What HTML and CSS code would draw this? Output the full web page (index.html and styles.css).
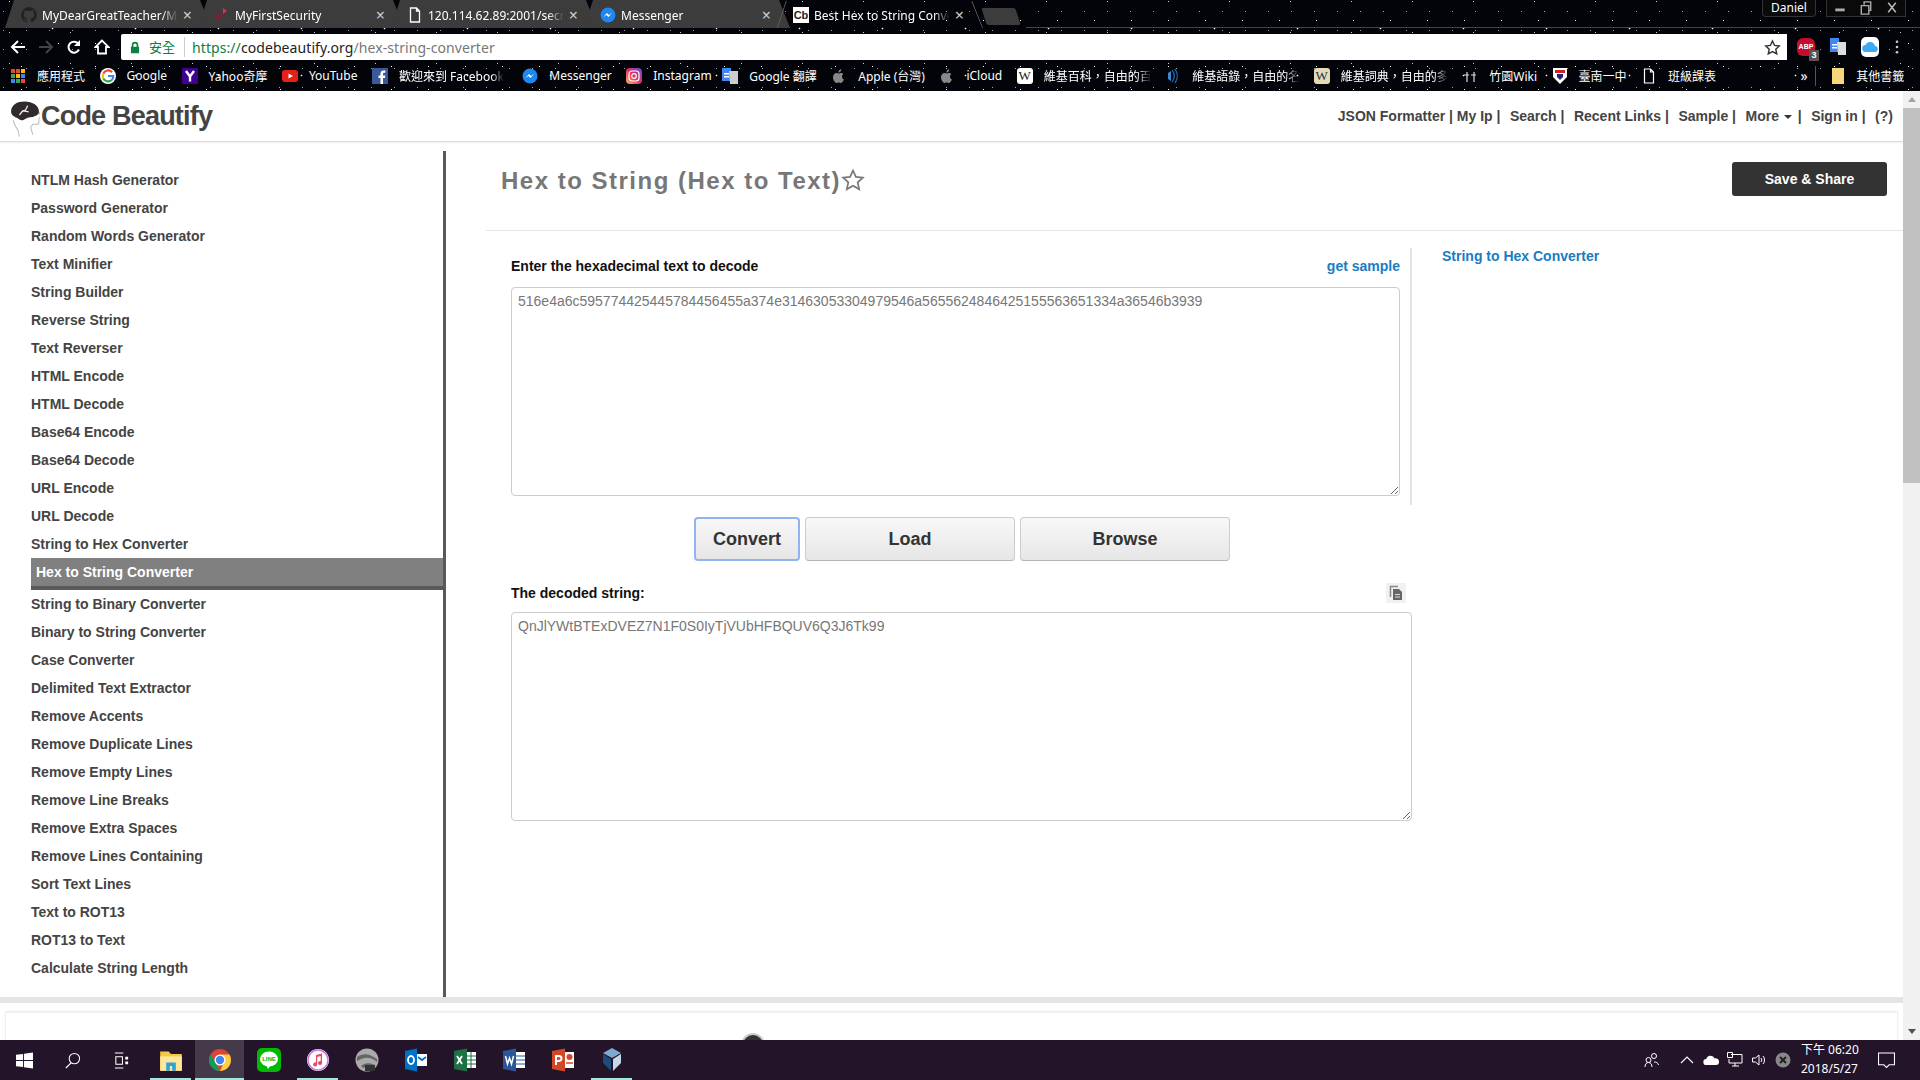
FILE: index.html
```html
<!DOCTYPE html>
<html lang="zh-Hant">
<head>
  <meta charset="UTF-8">
  <title>Best Hex to String Converter</title>
  <link rel="stylesheet" href="styles.css">
</head>
<body>
<div class="browser">
  <!-- tab strip -->
  <div class="tabs">
    <div class="tab">
      <svg class="fav" viewBox="0 0 16 16"><path fill="#222" d="M8 0a8 8 0 0 0-2.500 15.600c.4.100.5-.2.5-.4v-1.400c-2.200.5-2.700-1-2.700-1-.4-.9-.9-1.200-.9-1.200-.7-.5.100-.5.100-.5.800.1 1.200.8 1.200.8.700 1.200 1.900.9 2.300.7.100-.5.300-.9.500-1.100-1.800-.2-3.600-.9-3.600-4 0-.9.300-1.600.8-2.100-.1-.2-.4-1 .1-2.100 0 0 .7-.2 2.200.8a7.600 7.600 0 0 1 4 0c1.500-1 2.200-.8 2.200-.8.400 1.100.200 1.900.100 2.100.5.600.8 1.300.8 2.100 0 3.100-1.900 3.700-3.700 3.900.3.300.6.800.6 1.500v2.200c0 .2.100.5.600.4A8 8 0 0 0 8 0z"/></svg>
      <span class="tab-label">MyDearGreatTeacher/MyFirst</span><span class="tab-x">×</span>
    </div>
    <div class="tab">
      <svg class="fav" viewBox="0 0 16 16"><path fill="#d8344a" d="M9 1l4 3-4 3z"/><path fill="#7a2030" d="M8 2v8a3 3 0 1 1-2-2.800V2z"/></svg>
      <span class="tab-label">MyFirstSecurity</span><span class="tab-x">×</span>
    </div>
    <div class="tab">
      <svg class="fav" viewBox="0 0 16 16"><path fill="none" stroke="#fff" stroke-width="1.300" d="M3.500 1h6l3 3v11h-9zM9.500 1v3h3"/></svg>
      <span class="tab-label">120.114.62.89:2001/secret.html</span><span class="tab-x">×</span>
    </div>
    <div class="tab">
      <svg class="fav" viewBox="0 0 16 16"><circle cx="8" cy="8" r="7.500" fill="#1e88f0"/><path fill="#fff" d="M3.500 10l3.500-4 2 2 3-2-3.500 4-2-2z"/></svg>
      <span class="tab-label">Messenger</span><span class="tab-x">×</span>
    </div>
    <div class="tab tab-active">
      <span class="fav fav-cb">Cb</span>
      <span class="tab-label">Best Hex to String Converter</span><span class="tab-x">×</span>
    </div>
    <div class="tab-new"></div>
    <div class="tabs-rest">
      <span class="profile">Daniel</span>
      <div class="win-btns">
        <svg viewBox="0 0 22 17"><rect x="6" y="9" width="10" height="3" fill="#aaa"/></svg>
        <svg viewBox="0 0 22 17"><path fill="none" stroke="#aaa" stroke-width="1.500" d="M6 6h8v9H6zM9 5V2h7v9h-2"/></svg>
        <svg viewBox="0 0 22 17"><path fill="none" stroke="#bbb" stroke-width="1.600" d="M7 3l8 10M15 3L7 13"/></svg>
      </div>
    </div>
  </div>

  <!-- address bar -->
  <div class="toolbar">
    <svg class="tool" viewBox="0 0 16 16"><path fill="none" stroke="#fff" stroke-width="2" d="M15 8H2.500M8 2L2 8l6 6"/></svg>
    <svg class="tool" viewBox="0 0 16 16"><path fill="none" stroke="#444" stroke-width="2" d="M1 8h12.500M8 2l6 6-6 6"/></svg>
    <svg class="tool" viewBox="0 0 16 16"><path fill="none" stroke="#fff" stroke-width="2" d="M13 10.500A5.500 5.500 0 1 1 12.500 5"/><path fill="#fff" d="M14 1v6H8z"/></svg>
    <svg class="tool" viewBox="0 0 16 16"><path fill="none" stroke="#fff" stroke-width="1.800" d="M8 1.500L1.500 8H4v6.500h8V8h2.500z"/></svg>
    <div class="omnibox">
      <svg class="lock" viewBox="0 0 12 16"><path fill="#0b8043" d="M2 7V5a4 4 0 0 1 8 0v2h1v8H1V7zm2 0h4V5a2 2 0 0 0-4 0z"/></svg>
      <span class="secure">安全</span>
      <span class="url"><span class="url-scheme">https://</span><span class="url-host">codebeautify.org</span>/hex-string-converter</span>
      <svg class="url-star" viewBox="0 0 24 24"><path fill="none" stroke="#333" stroke-width="2" d="M12 2.800l2.900 6.200 6.700.8-5 4.600 1.400 6.700-6-3.400-6 3.400 1.400-6.700-5-4.600 6.700-.8z"/></svg>
    </div>
    <div class="ext">
      <span class="abp">ABP<b>3</b></span>
      <svg viewBox="0 0 18 18"><path fill="#4285f4" d="M1 0h9l1 14H1z"/><path fill="#ddd" d="M8 4h9v13H9z"/><path fill="#fff" d="M3 6h5v1.500H3zM3 9h5v1.500H3z"/></svg>
      <span class="icloud"><svg viewBox="0 0 18 18"><path fill="#3ea8f0" d="M5 14a3.500 3.500 0 0 1-.5-7 5 5 0 0 1 9.500 1 3 3 0 0 1-.5 6z"/></svg></span>
      <svg class="dots" viewBox="0 0 4 16"><circle cx="2" cy="2" r="1.500" fill="#ccc"/><circle cx="2" cy="8" r="1.500" fill="#ccc"/><circle cx="2" cy="14" r="1.500" fill="#ccc"/></svg>
    </div>
  </div>

  <!-- bookmarks -->
  <div class="bookmarks">
    <a class="bm"><svg viewBox="0 0 16 16"><g fill="#e8453c"><rect x="1" y="1" width="4" height="4"/><rect x="6" y="1" width="4" height="4"/></g><rect x="11" y="1" width="4" height="4" fill="#fbbc05"/><rect x="1" y="6" width="4" height="4" fill="#34a853"/><rect x="6" y="6" width="4" height="4" fill="#fbbc05"/><rect x="11" y="6" width="4" height="4" fill="#4285f4"/><rect x="1" y="11" width="4" height="4" fill="#4285f4"/><rect x="6" y="11" width="4" height="4" fill="#34a853"/><rect x="11" y="11" width="4" height="4" fill="#e8453c"/></svg>應用程式</a>
    <a class="bm"><svg viewBox="0 0 16 16"><circle cx="8" cy="8" r="8" fill="#fff"/><path fill="none" stroke="#ea4335" stroke-width="2.200" d="M12 4.200A5.300 5.300 0 0 0 3.300 5.500"/><path fill="none" stroke="#fbbc05" stroke-width="2.200" d="M3.300 5.500a5.300 5.300 0 0 0 0 5"/><path fill="none" stroke="#34a853" stroke-width="2.200" d="M3.300 10.500a5.300 5.300 0 0 0 8.700 1.200"/><path fill="none" stroke="#4285f4" stroke-width="2.200" d="M12 11.700A5 5 0 0 0 13.200 8H8"/></svg>Google</a>
    <a class="bm"><svg viewBox="0 0 16 16"><rect width="16" height="16" fill="#400090"/><path fill="none" stroke="#fff" stroke-width="2.400" d="M4 3l4 5.500L12 3M8 8v5.500"/></svg>Yahoo奇摩</a>
    <a class="bm"><svg viewBox="0 0 16 16"><rect y="2" width="16" height="12" rx="3" fill="#e62117"/><path fill="#fff" d="M6.500 5.500v5L11 8z"/></svg>YouTube</a>
    <a class="bm"><svg viewBox="0 0 16 16"><rect width="16" height="16" fill="#3b5998"/><path fill="#fff" d="M11 16V10h2l.3-2.500H11V6c0-.7.300-1.200 1.200-1.200h1.200V2.600c-.3 0-1-.1-1.800-.1-1.900 0-3.100 1.100-3.100 3.200v1.800h-2V10h2v6z"/></svg><span class="cut">歡迎來到 Facebook</span></a>
    <a class="bm bm-wide"><svg viewBox="0 0 16 16"><circle cx="8" cy="8" r="7.500" fill="#1e88f0"/><path fill="#fff" d="M3.500 10l3.500-4 2 2 3-2-3.500 4-2-2z"/></svg>Messenger</a>
    <a class="bm bm-tight"><svg viewBox="0 0 16 16"><defs><linearGradient id="ig" x1="0" y1="1" x2="1" y2="0"><stop offset="0" stop-color="#fdb54b"/><stop offset=".5" stop-color="#e1306c"/><stop offset="1" stop-color="#5851db"/></linearGradient></defs><rect width="16" height="16" rx="4" fill="url(#ig)"/><rect x="3" y="3" width="10" height="10" rx="3" fill="none" stroke="#fff" stroke-width="1.200"/><circle cx="8" cy="8" r="2.300" fill="none" stroke="#fff" stroke-width="1.200"/></svg>Instagram</a>
    <a class="bm"><svg viewBox="0 0 16 16"><path fill="#4285f4" d="M0 0h9l1 13H0z"/><path fill="#ccc" d="M7 3h9v13H8z"/><path fill="#fff" d="M2 5h5v1.500H2zM2 8h5v1.500H2z"/></svg>Google 翻譯</a>
    <a class="bm"><svg viewBox="0 0 16 16"><path fill="#888" d="M11 8.500c0-1.500 1.200-2.200 1.300-2.300-.7-1-1.800-1.200-2.200-1.200-.9-.1-1.800.6-2.300.6s-1.200-.5-2-.5C3.500 5.100 2 6.700 2 9.300c0 2.700 2 5.700 3.500 5.700.7 0 1.200-.5 2.200-.5s1.400.5 2.200.5c1.300 0 2.600-2.300 3-3.500-1-.4-1.900-1.500-1.900-3zM9.500 3.500c.5-.6.800-1.400.7-2.200-.7 0-1.500.5-2 1-.4.500-.8 1.300-.7 2.100.8.100 1.500-.4 2-.9z"/></svg>Apple (台灣)</a>
    <a class="bm"><svg viewBox="0 0 16 16"><path fill="#888" d="M11 8.500c0-1.500 1.200-2.200 1.300-2.300-.7-1-1.800-1.200-2.200-1.200-.9-.1-1.800.6-2.300.6s-1.200-.5-2-.5C3.500 5.100 2 6.700 2 9.300c0 2.700 2 5.700 3.500 5.700.7 0 1.200-.5 2.200-.5s1.400.5 2.200.5c1.300 0 2.600-2.300 3-3.500-1-.4-1.900-1.500-1.900-3zM9.500 3.500c.5-.6.800-1.400.7-2.200-.7 0-1.500.5-2 1-.4.500-.8 1.300-.7 2.100.8.100 1.500-.4 2-.9z"/></svg>iCloud</a>
    <a class="bm"><span class="ico-w">W</span><span class="cut">維基百科，自由的百科全書</span></a>
    <a class="bm"><svg viewBox="0 0 16 16"><path fill="none" stroke="#1d5d9b" stroke-width="1.500" d="M7 2a9 9 0 0 1 0 12M10 1a12 12 0 0 1 0 14"/><path fill="#3a8bd0" d="M3 5l3-2v10l-3-2z"/></svg><span class="cut">維基語錄，自由的名人錄</span></a>
    <a class="bm"><span class="ico-w ico-dict">W</span><span class="cut">維基詞典，自由的多語言</span></a>
    <a class="bm"><svg viewBox="0 0 16 16"><path fill="none" stroke="#ddd" stroke-width="1.200" d="M2 7h5M5 4v10M9 7h5M12 4v10"/></svg>竹園Wiki</a>
    <a class="bm"><svg viewBox="0 0 16 16"><path fill="#fff" d="M1 0h14v9l-7 7-7-7z"/><path fill="#c22" d="M3 2h10v3H3z"/><path fill="#227" d="M5 6h6v3l-3 3-3-3z"/></svg>臺南一中</a>
    <a class="bm"><svg viewBox="0 0 16 16"><path fill="none" stroke="#fff" stroke-width="1.200" d="M3.500 1h6l3 3v11h-9zM9.500 1v3h3"/></svg>班級課表</a>
    <span class="bm-more">»</span>
    <a class="bm bm-other"><svg viewBox="0 0 16 16"><path fill="#f6d77c" d="M2 0h12v16H2z"/></svg>其他書籤</a>
  </div>
</div>

<div class="page">
  <div class="page-body">
    <header class="site-head">
      <div class="logo">
        <svg viewBox="0 0 30 38"><path fill="none" stroke="#bbb" d="M4 21c1 5 4 8 5 11l1 5M29 13c1 3 2 4 2 5l-2 1 0 4c0 2-2 2-3 2l-3 0-2 3 2 7"/><path fill="#2f2b2b" d="M2 13C2 6 8 3 15 3c8 0 14 4 14 10 0 3-3 4-6 5-4 0-6 1-9 3-3 1-4-1-6-2-3-1-6-3-6-6z"/><path fill="none" stroke="#eee" stroke-width="1.300" d="M10 16c2-1 2-4 4-4s3-2 4-5M14 12l5 1"/></svg>
        <span class="logo-text">Code Beautify</span>
      </div>
      <nav class="top-nav">
        <a>JSON Formatter | My Ip |</a>
        <a>Search |</a>
        <a>Recent Links |</a>
        <a>Sample |</a>
        <a>More <i class="caret"></i> |</a>
        <a>Sign in |</a>
        <a>(?)</a>
      </nav>
    </header>

    <div class="columns">
      <ul class="side">
        <li>NTLM Hash Generator</li>
        <li>Password Generator</li>
        <li>Random Words Generator</li>
        <li>Text Minifier</li>
        <li>String Builder</li>
        <li>Reverse String</li>
        <li>Text Reverser</li>
        <li>HTML Encode</li>
        <li>HTML Decode</li>
        <li>Base64 Encode</li>
        <li>Base64 Decode</li>
        <li>URL Encode</li>
        <li>URL Decode</li>
        <li>String to Hex Converter</li>
        <li class="current">Hex to String Converter</li>
        <li>String to Binary Converter</li>
        <li>Binary to String Converter</li>
        <li>Case Converter</li>
        <li>Delimited Text Extractor</li>
        <li>Remove Accents</li>
        <li>Remove Duplicate Lines</li>
        <li>Remove Empty Lines</li>
        <li>Remove Line Breaks</li>
        <li>Remove Extra Spaces</li>
        <li>Remove Lines Containing</li>
        <li>Sort Text Lines</li>
        <li>Text to ROT13</li>
        <li>ROT13 to Text</li>
        <li>Calculate String Length</li>
      </ul>

      <main class="main">
        <div class="title-row">
          <h1>Hex to String (Hex to Text)</h1>
          <svg class="title-star" viewBox="0 0 24 24"><path fill="none" stroke="#777" stroke-width="1.700" d="M12 2.500l2.900 6.400 7 .8-5.200 4.700 1.500 6.900-6.200-3.500-6.200 3.500 1.500-6.900-5.200-4.700 7-.8z"/></svg>
          <button class="save">Save &amp; Share</button>
        </div>
        <div class="tool-row">
          <div class="tool-col">
            <div class="input-wrap">
              <div class="label-row"><label>Enter the hexadecimal text to decode</label><a class="link">get sample</a></div>
              <textarea class="box box-in" spellcheck="false">516e4a6c595774425445784456455a374e31463053304979546a5655624846425155563651334a36546b3939</textarea>
            </div>
            <div class="actions">
              <button class="btn btn-focus">Convert</button>
              <button class="btn btn-wide">Load</button>
              <button class="btn btn-wide">Browse</button>
            </div>
            <div class="label-row label-out"><label>The decoded string:</label>
              <span class="copy"><svg viewBox="0 0 14 16"><path fill="none" stroke="#888" stroke-width="1.500" d="M1.500 12V1.500H9"/><path fill="#666" d="M4 4h6l3 3v8H4z"/><path fill="#ddd" d="M6 9h5v1H6zM6 11.500h5v1H6z"/></svg></span>
            </div>
            <textarea class="box" spellcheck="false">QnJlYWtBTExDVEZ7N1F0S0IyTjVUbHFBQUV6Q3J6Tk99</textarea>
          </div>
          <a class="link side-link">String to Hex Converter</a>
        </div>
      </main>
    </div>

    <div class="foot-bar"></div>
    <div class="foot">
      <div class="foot-card"><span class="foot-logo"></span></div>
    </div>
  </div>

  <div class="scrollbar">
    <i class="arrow-up"></i>
    <div class="track"><div class="thumb"></div></div>
    <i class="arrow-down"></i>
  </div>
</div>

<div class="taskbar">
  <div class="task task-first task-sm"><svg viewBox="0 0 18 18"><path fill="#fff" d="M0 3l7.500-1v6.500H0zM8.500 1.800L18 .5v8H8.500zM0 9.500h7.500V16L0 15zM8.500 9.500H18v8l-9.500-1.300z"/></svg></div>
  <div class="task task-sm"><svg viewBox="0 0 18 18"><circle cx="11" cy="7" r="5.500" fill="none" stroke="#fff" stroke-width="1.100"/><path stroke="#fff" stroke-width="1.300" d="M7.500 11.500L2 17"/></svg></div>
  <div class="task task-sm"><svg viewBox="0 0 18 18"><path fill="none" stroke="#fff" stroke-width="1.100" d="M2 1h9M2 17h9M3 5h7v8H3z"/><path fill="#fff" d="M13 5h3v3h-3zM13 10h3v3h-3z"/></svg></div>
  <div class="task on"><svg viewBox="0 0 20 20"><path fill="#f6c945" d="M1 3h7l2 2h9v14H1z"/><path fill="#ffe79a" d="M1 7h18v12H1z"/><path fill="#2aa3dc" d="M6 12h8v7h-3v-4H9v4H6z"/></svg></div>
  <div class="task on active"><svg viewBox="0 0 24 24"><circle cx="12" cy="12" r="11" fill="#db4437"/><path fill="#0f9d58" d="M12 23A11 11 0 0 1 2.500 6.500L8 15l4 8z"/><path fill="#ffcd40" d="M12 23a11 11 0 0 0 9.500-16.500H12l4 8z"/><circle cx="12" cy="12" r="5.500" fill="#fff"/><circle cx="12" cy="12" r="4.200" fill="#4285f4"/></svg></div>
  <div class="task"><svg viewBox="0 0 24 24"><rect width="24" height="24" rx="5" fill="#00b900"/><ellipse cx="12" cy="11" rx="9" ry="7.500" fill="#fff"/><path fill="#fff" d="M9 17h5l-3 4z"/><text x="12" y="13" class="line-text">LINE</text></svg></div>
  <div class="task on"><svg viewBox="0 0 24 24"><circle cx="12" cy="12" r="11" fill="#fff"/><circle cx="12" cy="12" r="10" fill="none" stroke="#c77ade" stroke-width="1.500"/><path fill="#e8486a" d="M10 7l6-1.500V15a2 2 0 1 1-1.300-1.900V8l-3.500 1v7.500a2 2 0 1 1-1.200-1.900z"/></svg></div>
  <div class="task"><svg viewBox="0 0 24 24"><circle cx="12" cy="12" r="11.500" fill="#aaa"/><path fill="#666" d="M2 9c6-4 12-4 20 2v3c-7-6-13-5-20-1zM6 18c3-3 8-4 14-1l-2 3c-4-2-7-2-10 0z"/><rect x="10" y="17" width="10" height="6" fill="#333"/></svg></div>
  <div class="task"><svg viewBox="0 0 24 24"><path fill="#0072c6" d="M1 3l12-2.500v23L1 21z"/><rect x="13" y="6" width="10" height="12" fill="#fff"/><path fill="none" stroke="#0072c6" stroke-width="1.800" d="M14 9l4 3 4-3"/><ellipse cx="7" cy="12" rx="3" ry="4" fill="none" stroke="#fff" stroke-width="1.800"/></svg></div>
  <div class="task"><svg viewBox="0 0 24 24"><path fill="#1e7145" d="M1 3l13-2.500v23L1 21z"/><path fill="#fff" d="M14 4h9v16h-9z"/><path stroke="#1e7145" d="M14 8h9M14 12h9M14 16h9M18 4v16"/><path stroke="#fff" stroke-width="1.800" fill="none" d="M4 8l5 8M9 8l-5 8"/></svg></div>
  <div class="task"><svg viewBox="0 0 24 24"><path fill="#2b579a" d="M1 3l13-2.500v23L1 21z"/><path fill="#fff" d="M14 4h9v16h-9z"/><path stroke="#2b579a" d="M14 8h9M14 12h9M14 16h9"/><path stroke="#fff" stroke-width="1.500" fill="none" d="M3.500 8l2 8 2-6 2 6 2-8"/></svg></div>
  <div class="task"><svg viewBox="0 0 24 24"><path fill="#d24726" d="M1 3l13-2.500v23L1 21z"/><path fill="#fff" d="M14 4h9v16h-9z"/><circle cx="18.500" cy="9" r="3" fill="#d24726"/><path stroke="#d24726" stroke-width="1.500" d="M15 15h7"/><path stroke="#fff" stroke-width="2" fill="none" d="M5 17V8h3a2.500 2.500 0 0 1 0 5H5"/></svg></div>
  <div class="task on"><svg viewBox="0 0 24 24"><path fill="#7fa8cf" d="M12 0l9 5-9 5-9-5z"/><path fill="#1c4a7a" d="M3 6l8 5v12l-8-8z"/><path fill="#c5d8ea" d="M21 6l-8 5v12l8-8z"/></svg></div>

  <div class="tray">
    <svg class="people" viewBox="0 0 16 16"><path fill="none" stroke="#fff" d="M1 15c0-3 1.500-4.500 3.500-4.500S8 12 8 15M10 10c2 0 4 .5 4.500 3"/><circle cx="4.500" cy="8" r="2.500" fill="none" stroke="#fff"/><circle cx="10" cy="4" r="2.500" fill="none" stroke="#fff"/></svg>
    <svg viewBox="0 0 16 16"><path fill="none" stroke="#fff" stroke-width="1.100" d="M2 11l6-6 6 6"/></svg>
    <svg viewBox="0 0 16 16"><path fill="#fff" d="M3.500 13a3 3 0 0 1-.3-6 4.500 4.500 0 0 1 8.500-.5A3.300 3.300 0 0 1 16 10a3 3 0 0 1-3 3z"/></svg>
    <svg viewBox="0 0 16 16"><path fill="none" stroke="#fff" d="M4 2.500h11v8.500H2V7M8 11v3M5 14h7M.5.500h5v5h-5z"/></svg>
    <svg viewBox="0 0 16 16"><path fill="none" stroke="#fff" d="M1.500 6v4h3l3.500 3V3L4.500 6zM10 6a3 3 0 0 1 0 4M12 4a6 6 0 0 1 0 8"/></svg>
    <svg viewBox="0 0 16 16"><circle cx="8" cy="8" r="7.500" fill="#888"/><path stroke="#222" stroke-width="2" d="M5 5l6 6M11 5l-6 6"/></svg>
    <div class="clock"><span>下午 06:20</span><span>2018/5/27</span></div>
    <svg class="notify" viewBox="0 0 16 16"><path fill="none" stroke="#fff" d="M.5 1h15v11h-5L8 14.500 5.500 12h-5z"/></svg>
  </div>
</div>
</body>
</html>
```
FILE: styles.css
```css
* {
  box-sizing: border-box;
}

html, body {
  margin: 0;
  padding: 0;
  height: 1080px;
  overflow: hidden;
  background: #fff;
}

body {
  font-family: "Liberation Sans", Arial, sans-serif;
}

h1, ul, li {
  margin: 0;
  padding: 0;
  list-style: none;
}

/* browser frame */
.browser {
  height: 91px;
  color: #fff;
  font-family: "Noto Sans", "Noto Sans CJK TC", sans-serif;
  font-size: 12px;
  background-color: #02040a;
  background-image:
    radial-gradient(circle, #fff 0.7px, transparent 1.1px),
    radial-gradient(circle, #cfd6e6 0.6px, transparent 1px),
    radial-gradient(circle, #fff 0.6px, transparent 1px),
    radial-gradient(circle, #9aa 0.6px, transparent 1px);
  background-size: 83px 47px, 61px 31px, 37px 23px, 23px 19px;
  background-position: 11px 5px, 40px 17px, 3px 9px, 15px 2px;
}

.tabs {
  height: 28px;
  display: flex;
  padding-left: 5px;
}

.tab {
  position: relative;
  width: 206px;
  height: 28px;
  flex: none;
  margin-right: -13px;
  padding: 2px 19px 0 16px;
  display: flex;
  align-items: center;
  gap: 5px;
  background: #3c3c3c;
  clip-path: polygon(0 100%, 9px 0, 195px 0, 100% 100%);
}

.tab-active {
  background: transparent;
  border-bottom: 0;
}

.tab-active::before,
.tab-active::after {
  content: "";
  position: absolute;
  top: 0;
  width: 1px;
  height: 30px;
  background: #666;
}

.tab-active::before {
  left: 4px;
  transform: rotate(18deg);
}

.tab-active::after {
  right: 5px;
  transform: rotate(-22deg);
}

.fav {
  width: 16px;
  height: 16px;
  flex: none;
}

.fav-cb {
  background: #fff;
  color: #222;
  font: bold 11px/16px "Liberation Sans", sans-serif;
  text-align: center;
}

.tab-label {
  width: 112px;
  white-space: nowrap;
  overflow: hidden;
  flex: 1;
  -webkit-mask-image: linear-gradient(to right, #000 88%, transparent);
  mask-image: linear-gradient(to right, #000 88%, transparent);
}

.tab-x {
  flex: none;
  font-size: 16px;
  color: #ccc;
}

.tab-new {
  width: 34px;
  height: 17px;
  flex: none;
  margin: 8px 0 0 14px;
  background: #3c3c3c;
  transform: skewX(18deg);
  border-radius: 2px;
}

.tabs-rest {
  flex: 1;
  display: flex;
  justify-content: flex-end;
  align-items: flex-start;
  gap: 7px;
  padding-right: 14px;
  border-bottom: 1px solid #444;
  margin-left: 8px;
}

.profile {
  width: 54px;
  height: 17px;
  margin-right: 3px;
  line-height: 16px;
  text-align: center;
  border: 1px solid #333;
  border-top: 0;
  border-radius: 0 0 4px 4px;
  background: #0a0a0a;
}

.win-btns {
  display: flex;
  border: 1px solid #333;
  border-top: 0;
  height: 17px;
  background: #0a0a0a;
}

.win-btns svg {
  width: 26px;
  height: 16px;
}

.toolbar {
  height: 32px;
  display: flex;
  align-items: center;
  padding: 6px 8px 0 10px;
}

.tool {
  width: 16px;
  height: 16px;
  margin-right: 12px;
  flex: none;
}

.omnibox {
  width: 1666px;
  height: 26px;
  flex: none;
  margin-left: -1px;
  background: #fff;
  display: flex;
  align-items: center;
  padding: 0 6px 0 9px;
  border-radius: 2px 0 0 2px;
  font-size: 14px;
}

.lock {
  width: 10px;
  height: 13px;
}

.secure {
  margin-left: 9px;
  padding-right: 9px;
  border-right: 1px solid #ccc;
  color: #0b8043;
  font-size: 13px;
  line-height: 20px;
}

.url {
  margin-left: 7px;
  flex: 1;
  color: #777;
  letter-spacing: 0.080px;
}

.url-scheme {
  color: #0b8043;
}

.url-host {
  color: #222;
}

.url-star {
  width: 17px;
  height: 17px;
}

.ext {
  flex: 1;
  display: flex;
  align-items: center;
  gap: 14px;
  padding-left: 10px;
}

.ext svg {
  width: 18px;
  height: 18px;
  flex: none;
}

.ext .dots {
  width: 4px;
  height: 14px;
  margin-left: 2px;
}

.abp {
  position: relative;
  width: 18px;
  height: 18px;
  background: #c70d2c;
  border-radius: 6px;
  font: bold 7px/18px "Liberation Sans", sans-serif;
  text-align: center;
}

.abp b {
  position: absolute;
  right: -4px;
  bottom: -5px;
  width: 10px;
  height: 11px;
  background: #555;
  font-size: 9px;
  line-height: 11px;
}

.icloud {
  width: 18px;
  height: 20px;
  background: #fff;
  border-radius: 5px;
  display: flex;
  align-items: center;
}

.bookmarks {
  height: 31px;
  display: flex;
  align-items: center;
  padding: 0 0 0 10px;
  gap: 14.500px;
  white-space: nowrap;
}

.bm {
  display: flex;
  align-items: center;
  gap: 11px;
  flex: none;
}

.bm-wide {
  margin-left: 4px;
}

.bm-tight {
  margin-right: -4px;
}

.bm svg,
.ico-w {
  width: 16px;
  height: 16px;
  flex: none;
}

.ico-w {
  background: #fff;
  color: #222;
  border-radius: 3px;
  font: 13px/16px "Liberation Serif", serif;
  text-align: center;
}

.ico-dict {
  background: #e6d9b8;
  color: #234;
}

.cut {
  max-width: 107px;
  overflow: hidden;
  -webkit-mask-image: linear-gradient(to right, #000 88%, transparent);
  mask-image: linear-gradient(to right, #000 88%, transparent);
}

.bm-more {
  margin-left: 70px;
  padding-right: 7px;
  border-right: 1px solid #555;
  font-size: 14px;
  line-height: 20px;
}

.bm-other {
  gap: 10px;
}

/* page */
.page {
  height: 949px;
  display: flex;
  overflow: hidden;
}

.page-body {
  width: 1903px;
  display: flex;
  flex-direction: column;
}

.site-head {
  height: 51px;
  flex: none;
  display: flex;
  justify-content: space-between;
  align-items: center;
  padding: 0 10px 0 9px;
  border-bottom: 1px solid #ddd;
  box-shadow: 0 1px 2px #eee;
}

.logo {
  display: flex;
  align-items: center;
  gap: 1px;
}

.logo svg {
  width: 31px;
  height: 40px;
  margin-top: 4px;
}

.logo-text {
  font-size: 27px;
  font-weight: bold;
  color: #444;
  letter-spacing: -0.800px;
}

.top-nav {
  display: flex;
  gap: 9.500px;
  font-size: 14px;
  font-weight: bold;
  color: #444;
}

.caret {
  display: inline-block;
  margin: 0 2px 2px 1px;
  border-top: 4px solid #333;
  border-left: 4px solid transparent;
  border-right: 4px solid transparent;
}

.columns {
  height: 846px;
  flex: none;
  margin-top: 9px;
  display: flex;
}

/* tool list */
.side {
  width: 446px;
  flex: none;
  padding: 15px 0 0 31px;
  border-right: 3px solid #595959;
  font-size: 14px;
  font-weight: bold;
  color: #444;
}

.side li {
  height: 28px;
  line-height: 28px;
}

.side li.current {
  height: 32px;
  padding-left: 5px;
  background: #808080;
  color: #fff;
  border-bottom: 4px solid #595959;
}

.main {
  flex: 1;
  padding-left: 40px;
}

.title-row {
  height: 80px;
  display: flex;
  align-items: flex-start;
  padding: 11px 16px 0 15px;
  border-bottom: 1px solid #e5e5e5;
}

h1 {
  margin-top: 2px;
  font-size: 24px;
  line-height: 34px;
  font-weight: bold;
  color: #777;
  letter-spacing: 1.500px;
}

.title-star {
  width: 24px;
  height: 24px;
  margin-top: 6px;
}

.save {
  margin-left: auto;
  width: 155px;
  height: 34px;
  background: #333;
  border: 0;
  border-radius: 3px;
  color: #fff;
  font: bold 14px "Liberation Sans", sans-serif;
}

.tool-row {
  display: flex;
  padding-left: 25px;
}

.tool-col {
  width: 901px;
  flex: none;
}

.input-wrap {
  margin-top: 17px;
  padding: 8px 10px 9px 0;
  border-right: 2px solid #e5e5e5;
}

.label-row {
  height: 20px;
  margin-bottom: 11px;
  display: flex;
  justify-content: space-between;
  align-items: center;
  font-size: 14px;
  font-weight: bold;
  color: #111;
}

.link {
  color: #1a7cc2;
  font-size: 14px;
  font-weight: bold;
}

.side-link {
  margin: 17px 0 0 30px;
}

.box {
  display: block;
  width: 100%;
  height: 209px;
  padding: 5px 6px;
  border: 1px solid #ccc;
  border-radius: 4px;
  background: #fff;
  font: 14px/16px "Liberation Sans", sans-serif;
  color: #777;
  outline: 0;
}

.actions {
  margin: 12px 0 0 183px;
  display: flex;
  gap: 5px;
}

.btn {
  width: 106px;
  height: 44px;
  border: 1px solid #ccc;
  border-bottom-color: #b5b5b5;
  border-radius: 4px;
  background: linear-gradient(#f8f8f8, #e6e6e6);
  font: bold 18px "Liberation Sans", sans-serif;
  color: #333;
}

.btn-wide {
  width: 210px;
}

.btn-focus {
  border: 2px solid #8fb4f0;
}

.label-out {
  height: 22px;
  margin: 21px 0 8px;
}

.copy {
  width: 20px;
  height: 20px;
  margin-right: 6px;
  background: #f1f1f1;
  display: flex;
  align-items: center;
  justify-content: center;
}

.copy svg {
  width: 14px;
  height: 16px;
}

.foot-bar {
  height: 6px;
  flex: none;
  background: #e4e4e4;
}

.foot {
  flex: 1;
  min-height: 0;
  padding: 9px 5px 0;
}

.foot-card {
  position: relative;
  height: 40px;
  border: 1px solid #f0f0f0;
  border-bottom: 0;
  box-shadow: 0 -1px 2px #eee;
}

/* cut off by the taskbar */
.foot-logo {
  position: absolute;
  left: 735px;
  top: 20px;
  width: 24px;
  height: 24px;
  border: 2px solid #ccc;
  border-radius: 50%;
  background: #333;
}

.scrollbar {
  width: 17px;
  background: #f1f1f1;
  display: flex;
  flex-direction: column;
  align-items: center;
}

.arrow-up,
.arrow-down {
  flex: none;
  margin: 6px 0;
  border-left: 4px solid transparent;
  border-right: 4px solid transparent;
}

.arrow-up {
  border-bottom: 5px solid #a3a3a3;
}

.arrow-down {
  border-top: 5px solid #505050;
}

.track {
  flex: 1;
  width: 100%;
}

.thumb {
  height: 375px;
  background: #c1c1c1;
}

/* windows taskbar */
.taskbar {
  height: 40px;
  display: flex;
  background: #24142a;
}

.task {
  position: relative;
  width: 49px;
  height: 40px;
  display: flex;
  align-items: center;
  justify-content: center;
}

.task-first {
  width: 48px;
}

.task svg {
  width: 24px;
  height: 24px;
}

.task-sm svg {
  width: 17px;
  height: 17px;
}

.task.on::after {
  content: "";
  position: absolute;
  left: 4px;
  right: 4px;
  bottom: 0;
  height: 2px;
  background: #9fe8dc;
}

.task.active {
  background: #443a4a;
}

.task.active::after {
  left: 0;
  right: 0;
}

.line-text {
  font: bold 6px "Liberation Sans", sans-serif;
  fill: #00b900;
  text-anchor: middle;
}

.tray {
  margin-left: auto;
  display: flex;
  align-items: center;
  gap: 8px;
  padding-right: 25px;
}

.tray svg {
  width: 16px;
  height: 16px;
}

.tray .people {
  margin-right: 11px;
}

.clock {
  width: 58px;
  margin: 0 11px 0 2px;
  display: flex;
  flex-direction: column;
  gap: 3px;
  padding-bottom: 2px;
  color: #fff;
  font: 12px/16px "Noto Sans", "Noto Sans CJK TC", sans-serif;
}

.tray .notify {
  width: 17px;
  height: 17px;
}
```
